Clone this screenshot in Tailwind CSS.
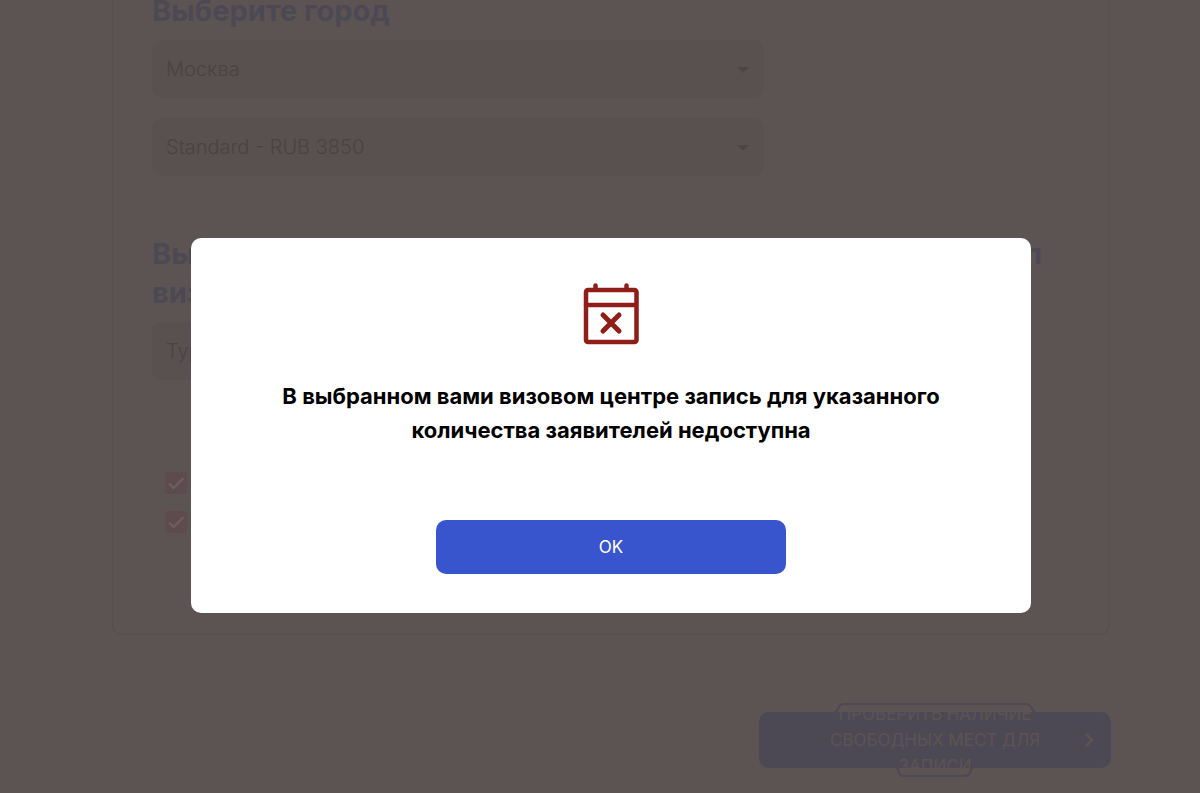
<!DOCTYPE html>
<html lang="ru">
<head>
<meta charset="utf-8">
<meta name="viewport" content="width=device-width, initial-scale=1">
<title>Запись</title>
<script src="https://cdn.jsdelivr.net/npm/@tailwindcss/browser@4"></script>
</head>
<body class="min-h-screen overflow-hidden bg-[#5b5453] font-['Inter','Liberation_Sans',sans-serif]">
<main class="pl-[22px]">
  <div class="mx-auto max-w-[998px]">
    <section class="rounded-b-[10px] border border-t-0 border-[#545051] px-[39px] pb-[101px]">
      <h2 class="-mt-[9px] text-[29px] leading-[39px] font-bold text-[#4c4954]"><label for="city">Выберите город</label></h2>
      <div class="mt-[10px] flex max-w-[612px] flex-col gap-5">
        <div class="relative">
          <select id="city" class="block h-[58px] w-full appearance-none rounded-[10px] bg-[#585150] px-[14px] text-[20px] font-light text-[#494342]"><option>Москва</option></select>
          <svg class="pointer-events-none absolute top-[27px] right-[15px] h-[6px] w-3" viewBox="0 0 12 6" fill="#4b4645"><path d="M0 0h12L6 6z"/></svg>
        </div>
        <div class="relative">
          <select aria-label="Тариф" class="block h-[58px] w-full appearance-none rounded-[10px] bg-[#585150] px-[14px] text-[20px] font-light text-[#494342]"><option>Standard - RUB 3850</option></select>
          <svg class="pointer-events-none absolute top-[27px] right-[15px] h-[6px] w-3" viewBox="0 0 12 6" fill="#4b4645"><path d="M0 0h12L6 6z"/></svg>
        </div>
      </div>
      <h2 class="mt-[58px] text-[29px] leading-[39px] font-bold text-[#4c4954]"><label for="visa"><span class="flex max-w-[890px] justify-between"><span>Выберите</span><span>тип</span></span>визы</label></h2>
      <select id="visa" class="mt-[10px] block h-[58px] w-full max-w-[612px] appearance-none rounded-[10px] bg-[#585150] px-[14px] text-[20px] font-light text-[#494342]"><option>Туризм</option></select>
      <div class="mt-[92px] ml-[13px] flex flex-col gap-[17px]">
        <div class="relative h-[22px] w-[22px]">
          <input type="checkbox" checked aria-label="Согласие с условиями" class="block h-[22px] w-[22px] appearance-none rounded-[3px] bg-[#5d4b4e]">
          <svg class="pointer-events-none absolute inset-0 h-[22px] w-[22px]" viewBox="0 0 22 22" fill="none" stroke="#6b6160" stroke-width="2"><path d="M4 11.500l4.500 4.500L18.500 6"/></svg>
        </div>
        <div class="relative h-[22px] w-[22px]">
          <input type="checkbox" checked aria-label="Согласие на обработку данных" class="block h-[22px] w-[22px] appearance-none rounded-[3px] bg-[#5d4b4e]">
          <svg class="pointer-events-none absolute inset-0 h-[22px] w-[22px]" viewBox="0 0 22 22" fill="none" stroke="#6b6160" stroke-width="2"><path d="M4 11.500l4.500 4.500L18.500 6"/></svg>
        </div>
      </div>
    </section>
    <div class="-mr-px mt-[77px] flex justify-end">
      <button type="button" class="relative flex h-14 w-[352px] items-center justify-center rounded-[10px] bg-[#4c4954] text-[17px] leading-[26px] text-[#5b5453]">
        <span class="w-[220px] text-center">ПРОВЕРИТЬ НАЛИЧИЕ СВОБОДНЫХ МЕСТ ДЛЯ ЗАПИСИ</span>
        <svg class="absolute top-[20px] right-[16px] h-[16px] w-[11px]" viewBox="0 0 11 16" fill="none" stroke="#5b5453" stroke-width="2.500"><path d="M2 2l6 6-6 6"/></svg>
        <svg class="absolute -top-[10px] left-0 h-[76px] w-[352px]" viewBox="0 0 352 76" fill="none" stroke="#4c4954" stroke-width="2"><path d="M74 11C81 11 77 2 85 2H267C275 2 271 11 278 11M136 65C142 65 136 74 146 74H205C215 74 209 65 215 65"/></svg>
      </button>
    </div>
  </div>
</main>
<div class="fixed inset-0 flex items-start justify-center pt-[238px] pl-[22px]">
  <div role="dialog" aria-modal="true" aria-labelledby="message" class="flex w-full max-w-[840px] flex-col items-center rounded-[10px] bg-white px-20 pt-[45px] pb-[39px]">
    <svg class="h-[62px] w-[56px]" viewBox="0 0 56 62" fill="none" stroke="#8f1d18" stroke-width="4.500" stroke-linecap="round" stroke-linejoin="round"><rect x="3" y="7" width="50.500" height="52" rx="2"/><path d="M3 22h50M12.500 2.500V6M43.500 2.500V6"/><path stroke-width="5" d="M20 32l16 16M36 32L20 48"/></svg>
    <h1 id="message" class="mt-[34px] text-center text-[22px] leading-[34px] font-bold text-black">В выбранном вами визовом центре запись для указанного<br>количества заявителей недоступна</h1>
    <button type="button" class="mt-[73px] h-[54px] w-full max-w-[350px] rounded-[10px] bg-[#3855ce] pt-[2px] text-[17px] text-white">OK</button>
  </div>
</div>
</body>
</html>
